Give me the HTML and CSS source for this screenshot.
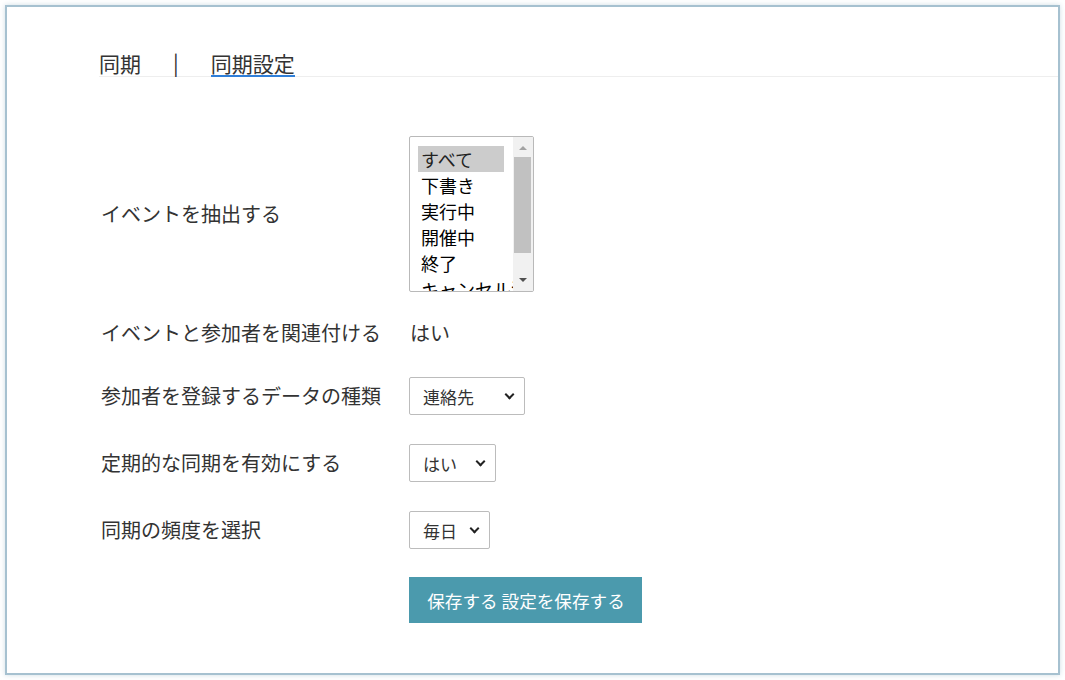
FILE: index.html
```html
<!DOCTYPE html>
<html lang="ja">
<head>
<meta charset="utf-8">
<title>同期設定</title>
<link rel="stylesheet" href="styles.css">
</head>
<body>
<div class="frame">
  <nav class="tabs">
    <span class="tab">同期</span>
    <span class="sep">|</span>
    <span class="tab active">同期設定</span>
  </nav>
  <form class="form">
    <label class="label">イベントを抽出する</label>
    <div class="control">
      <div class="listbox" role="listbox" aria-multiselectable="true">
        <div class="options">
          <div class="option selected" role="option" aria-selected="true">すべて</div>
          <div class="option" role="option">下書き</div>
          <div class="option" role="option">実行中</div>
          <div class="option" role="option">開催中</div>
          <div class="option" role="option">終了</div>
          <div class="option" role="option">キャンセル済み</div>
        </div>
        <div class="scrollbar">
          <div class="sb-btn"><span class="arrow-up"></span></div>
          <div class="sb-track"><div class="sb-thumb"></div></div>
          <div class="sb-btn"><span class="arrow-down"></span></div>
        </div>
      </div>
    </div>

    <label class="label short">イベントと参加者を関連付ける</label>
    <div class="control text-value short">はい</div>

    <label class="label">参加者を登録するデータの種類</label>
    <div class="control">
      <span class="select-wrap"><select class="dropdown w-contact"><option>連絡先</option><option>リード</option></select></span>
    </div>

    <label class="label">定期的な同期を有効にする</label>
    <div class="control">
      <span class="select-wrap"><select class="dropdown w-yes"><option>はい</option><option>いいえ</option></select></span>
    </div>

    <label class="label">同期の頻度を選択</label>
    <div class="control">
      <span class="select-wrap"><select class="dropdown w-daily"><option>毎日</option><option>毎週</option></select></span>
    </div>

    <div class="spacer"></div>
    <div class="control">
      <button type="button" class="save">保存する 設定を保存する</button>
    </div>
  </form>
</div>
</body>
</html>
```

FILE: styles.css
```css
html, body {
  margin: 0;
  padding: 0;
  background: #fff;
}

body {
  font-family: "Noto Sans CJK JP", "Noto Sans", sans-serif;
  color: #333;
}

.frame {
  box-sizing: border-box;
  margin: 5px;
  width: 1055px;
  height: 670px;
  border: 2px solid #a6c1d0;
  box-shadow: 0 0 5px rgba(166, 193, 208, 0.55);
  padding-top: 44px;
}

.tabs {
  display: flex;
  align-items: flex-end;
  margin-left: 92px;
  border-bottom: 1px solid #eeeeee;
  font-size: 21px;
  line-height: 22px;
}

.tab {
  display: block;
  padding-bottom: 1px;
  border-bottom: 2px solid transparent;
  margin-bottom: -1px;
}

.tab.active {
  border-bottom-color: #2f7fd9;
}

.sep {
  display: block;
  padding-bottom: 3px;
  margin: 0 32px;
}

.form {
  display: grid;
  grid-template-columns: 308px auto;
  row-gap: 29px;
  align-items: center;
  justify-items: start;
  margin-top: 59px;
  margin-left: 94px;
  font-size: 20px;
}

.label,
.text-value {
  line-height: 24px;
}

.short {
  padding-bottom: 3px;
}

.text-value {
  margin-left: 1px;
}

/* listbox */
.listbox {
  box-sizing: border-box;
  display: flex;
  width: 125px;
  height: 156px;
  border: 1px solid #b9b9b9;
  border-radius: 2px;
  background: #fff;
  overflow: hidden;
}

.options {
  flex: 1;
  min-width: 0;
  padding: 9px 9px 0 8px;
  overflow: hidden;
  font-size: 18px;
  color: #000;
}

.option {
  padding: 0 3px;
  line-height: 26px;
  white-space: nowrap;
}

.option.selected {
  background: #cccccc;
  color: #222;
}

.scrollbar {
  display: flex;
  flex-direction: column;
  width: 20px;
  background: #f1f1f1;
}

.sb-btn {
  display: flex;
  align-items: center;
  justify-content: center;
  height: 17px;
}

.sb-track {
  flex: 1;
  padding: 3px 2px 0 1px;
}

.sb-thumb {
  height: 96px;
  background: #c1c1c1;
}

.arrow-up {
  width: 0;
  height: 0;
  margin-top: 4px;
  border-left: 4px solid transparent;
  border-right: 4px solid transparent;
  border-bottom: 4px solid #a3a3a3;
}

.arrow-down {
  width: 0;
  height: 0;
  margin-bottom: 6px;
  border-left: 4px solid transparent;
  border-right: 4px solid transparent;
  border-top: 4px solid #505050;
}

/* dropdowns */
.select-wrap {
  position: relative;
  display: inline-block;
}

.select-wrap::after {
  content: "";
  position: absolute;
  right: 12px;
  top: 14px;
  width: 5px;
  height: 5px;
  border-right: 2px solid #222;
  border-bottom: 2px solid #222;
  transform: rotate(45deg);
  pointer-events: none;
}

.dropdown {
  display: block;
  box-sizing: border-box;
  height: 38px;
  padding: 0 6px 0 13px;
  border: 1px solid #bcbcbc;
  border-radius: 2px;
  background: #fff;
  appearance: none;
  -webkit-appearance: none;
  font-family: inherit;
  font-size: 17px;
  color: #333;
}

.w-contact { width: 116px; }
.w-yes { width: 87px; }
.w-daily { width: 81px; }

.save {
  box-sizing: border-box;
  width: 233px;
  height: 46px;
  margin-top: -1px;
  padding: 0 0 0 1px;
  border: none;
  background: #4b9aad;
  color: #fff;
  font-family: inherit;
  font-size: 17.6px;
  cursor: pointer;
}
```
